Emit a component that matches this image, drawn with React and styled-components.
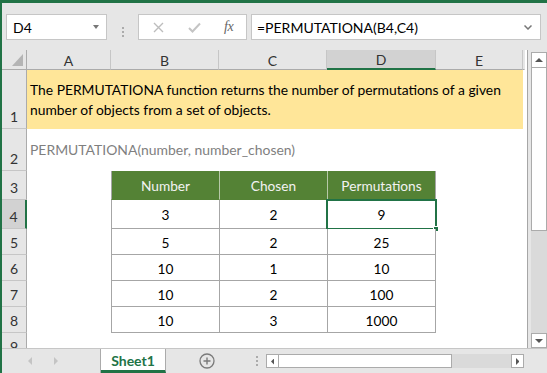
import React from 'react';
import styled, { createGlobalStyle } from 'styled-components';

const FONT = `"Lato", "Open Sans", "Liberation Sans", sans-serif`;
const GREEN = '#217346';

const Global = createGlobalStyle`
  html, body { margin: 0; padding: 0; background: #e6e6e6; overflow: hidden; }
  body { font-family: ${FONT}; }
  * { box-sizing: border-box; }
`;

const Window = styled.div`
  width: 547px;
  height: 373px;
  border-top: 3px solid ${GREEN};
  border-left: 2px solid ${GREEN};
  background: #e6e6e6;
  display: flex;
  flex-direction: column;
  overflow: hidden;
`;

/* ---------- formula bar ---------- */
const FormulaBar = styled.div`
  height: 47px;
  flex: none;
  display: flex;
  align-items: flex-start;
  padding: 11px 0 0 4px;
`;

const Box = styled.div`
  height: 26px;
  width: ${p => p.$w}px;
  flex: none;
  background: #fff;
  border: 1px solid #c6c6c6;
  display: flex;
  align-items: center;
  position: relative;
  font-size: 14px;
  color: #000;
`;

const NameText = styled.span`
  padding-left: 6px;
  flex: 1;
`;

const DownTri = styled.span`
  width: 0;
  height: 0;
  border-left: 3.5px solid transparent;
  border-right: 3.5px solid transparent;
  border-top: 4px solid #777;
  margin-right: 7px;
`;

const Splitter = styled.div`
  width: ${p => p.$w}px;
  flex: none;
  height: 100%;
  display: flex;
  flex-direction: column;
  align-items: center;
  justify-content: center;
  gap: 2px;
  span {
    width: 2px;
    height: 2px;
    background: #ababab;
  }
`;

const FxIcons = styled.div`
  display: flex;
  align-items: center;
  width: 100%;
  padding-left: 13px;
`;

const IconSlot = styled.span`
  width: ${p => p.$w}px;
  display: flex;
  justify-content: center;
  align-items: center;
`;

const Fx = styled.span`
  font-family: "Liberation Serif", "DejaVu Serif", serif;
  font-style: italic;
  font-size: 14px;
  color: #666;
  letter-spacing: -0.5px;
`;

const FormulaText = styled.span`
  flex: 1;
  padding-left: 5px;
  font-size: 14px;
`;

const Chevron = styled.svg`
  margin-right: 8px;
`;

/* ---------- sheet ---------- */
const Middle = styled.div`
  flex: 1;
  display: flex;
  min-height: 0;
  overflow: hidden;
`;

const Sheet = styled.div`
  width: 523px;
  flex: none;
  display: flex;
  flex-direction: column;
  background: #fff;
  overflow: hidden;
`;

const Row = styled.div`
  display: flex;
  height: ${p => p.$h}px;
  flex: none;
`;

const Corner = styled.div`
  width: 25px;
  flex: none;
  background: #e6e6e6;
  border-right: 1px solid #ababab;
  border-bottom: 1px solid #ababab;
  display: flex;
  align-items: flex-end;
  justify-content: flex-end;
  padding: 0 3px 3px 0;
`;

const ColHead = styled.div`
  width: ${p => p.$w}px;
  flex: ${p => (p.$fill ? '1' : 'none')};
  background: ${p => (p.$sel ? '#d2d2d2' : '#e6e6e6')};
  border-right: 1px solid ${p => (p.$fill ? 'transparent' : '#c6c6c6')};
  border-bottom: ${p => (p.$sel ? `2px solid ${GREEN}` : '1px solid #ababab')};
  display: flex;
  align-items: center;
  justify-content: center;
  font-size: 14px;
  color: #333;
  padding-top: 1px;
`;

const RowHead = styled.div`
  width: 25px;
  flex: none;
  background: ${p => (p.$sel ? '#d2d2d2' : '#e6e6e6')};
  border-right: ${p => (p.$sel ? `2px solid ${GREEN}` : '1px solid #ababab')};
  border-bottom: 1px solid #c6c6c6;
  display: flex;
  align-items: flex-end;
  justify-content: center;
  padding-bottom: 3px;
  font-size: 14px;
  color: #333;
`;

const Cell = styled.div`
  width: ${p => p.$w}px;
  flex: ${p => (p.$fill ? '1' : 'none')};
  background: ${p => p.$bg || '#fff'};
`;

const NoteCell = styled.div`
  width: 496px;
  flex: none;
  background: #ffe699;
  display: flex;
  flex-direction: column;
  justify-content: center;
  padding-left: 3px;
  font-size: 13.85px;
  line-height: 20px;
  color: #000;
`;

const SyntaxCell = styled.div`
  width: 496px;
  flex: none;
  display: flex;
  align-items: center;
  padding: 0 0 1px 3px;
  font-size: 13.95px;
  color: #7f7f7f;
`;

const TCell = styled.div`
  width: ${p => p.$w}px;
  flex: none;
  position: relative;
  background: ${p => (p.$head ? '#548235' : '#fff')};
  color: ${p => (p.$head ? '#f2f2f2' : '#000')};
  border-left: 1px solid ${p => (p.$head && !p.$first ? '#b7c9a8' : '#a6a6a6')};
  border-right: ${p => (p.$last ? '1px solid #a6a6a6' : 'none')};
  border-bottom: 1px solid ${p => (p.$head ? '#548235' : '#a6a6a6')};
  display: flex;
  align-items: center;
  justify-content: center;
  font-size: 13.7px;
  padding-top: 1px;
`;

const Selection = styled.div`
  position: absolute;
  left: -2px;
  top: -1px;
  right: -2px;
  bottom: -2px;
  border: 2px solid ${GREEN};
  pointer-events: none;
`;

const Handle = styled.div`
  position: absolute;
  right: -4px;
  bottom: -4px;
  width: 6px;
  height: 6px;
  background: ${GREEN};
  border: 1px solid #fff;
`;

/* ---------- vertical scrollbar ---------- */
const VScroll = styled.div`
  width: 22px;
  flex: none;
  border-left: 1px solid #a6a6a6;
  background: #e6e6e6;
  display: flex;
  flex-direction: column;
  padding: 2px 2px 0 3px;
`;

const ScrollBtn = styled.div`
  width: ${p => p.$w}px;
  height: ${p => p.$h}px;
  flex: none;
  background: #fff;
  border: 1px solid #ababab;
  display: flex;
  align-items: center;
  justify-content: center;
`;

const VThumb = styled.div`
  height: 163px;
  flex: none;
  background: #fff;
  border: 1px solid #ababab;
  border-top: none;
`;

const Track = styled.div`
  flex: 1;
  background: #dadada;
`;

/* ---------- bottom bar ---------- */
const BottomBar = styled.div`
  height: 25px;
  flex: none;
  display: flex;
  border-top: 1px solid #c6c6c6;
  background: #e6e6e6;
`;

const TabNav = styled.div`
  width: 99px;
  flex: none;
  border-right: 1px solid #ababab;
  display: flex;
  align-items: center;
  padding-left: 26px;
  gap: 22px;
`;

const SheetTab = styled.div`
  width: 65px;
  flex: none;
  background: #fff;
  border-right: 1px solid #ababab;
  border-bottom: 3px solid ${GREEN};
  display: flex;
  align-items: center;
  justify-content: center;
  font-weight: 700;
  font-size: 14px;
  color: ${GREEN};
  padding-top: 2px;
`;

const AddSheet = styled.div`
  width: 82px;
  flex: none;
  display: flex;
  align-items: center;
  justify-content: center;
`;

const HScroll = styled.div`
  flex: 1;
  display: flex;
  align-items: center;
  padding-right: 23px;
`;

const HThumb = styled.div`
  width: 173px;
  height: 14px;
  flex: none;
  background: #fff;
  border: 1px solid #ababab;
  border-left: none;
`;

const HTrack = styled.div`
  flex: 1;
  height: 14px;
  background: #dadada;
`;

const Tri = ({ dir, color = '#555', size = 4 }) => {
  const s = size;
  const pts = {
    up: `0,${s} ${s},0 ${2 * s},${s}`,
    down: `0,0 ${2 * s},0 ${s},${s}`,
    left: `${s},0 ${s},${2 * s} 0,${s}`,
    right: `0,0 0,${2 * s} ${s},${s}`,
  }[dir];
  const w = dir === 'up' || dir === 'down' ? 2 * s : s;
  const h = dir === 'up' || dir === 'down' ? s : 2 * s;
  return (
    <svg width={w} height={h} viewBox={`0 0 ${w} ${h}`}>
      <polygon points={pts} fill={color} />
    </svg>
  );
};

const cols = [
  { k: 'A', w: 84 },
  { k: 'B', w: 108 },
  { k: 'C', w: 108 },
  { k: 'D', w: 109, sel: true },
  { k: 'E', w: 87 },
];

const data = [
  [3, 2, 9],
  [5, 2, 25],
  [10, 1, 10],
  [10, 2, 100],
  [10, 3, 1000],
];

const TableRow = ({ n, h, vals, head, sel }) => (
  <Row $h={h}>
    <RowHead $sel={sel}>{n}</RowHead>
    <Cell $w={84} />
    <TCell $w={108} $head={head} $first>{vals[0]}</TCell>
    <TCell $w={108} $head={head}>{vals[1]}</TCell>
    <TCell $w={109} $head={head} $last>
      {vals[2]}
      {sel && (
        <Selection>
          <Handle />
        </Selection>
      )}
    </TCell>
    <Cell $fill />
  </Row>
);

export default function App() {
  return (
    <>
      <Global />
      <Window>
        <FormulaBar>
          <Box $w={101}>
            <NameText>D4</NameText>
            <DownTri />
          </Box>
          <Splitter $w={31}>
            <span />
            <span />
            <span />
          </Splitter>
          <Box $w={109}>
            <FxIcons>
              <IconSlot $w={13}>
                <svg width="11" height="11" viewBox="0 0 11 11">
                  <path d="M1 1 L10 10 M10 1 L1 10" stroke="#bdbdbd" strokeWidth="1.4" />
                </svg>
              </IconSlot>
              <IconSlot $w={23} />
              <IconSlot $w={13}>
                <svg width="13" height="11" viewBox="0 0 13 11">
                  <path d="M1 6 L4.5 9.5 L12 1.5" stroke="#c4c4c4" strokeWidth="2" fill="none" />
                </svg>
              </IconSlot>
              <IconSlot $w={23} />
              <Fx>fx</Fx>
            </FxIcons>
          </Box>
          <Splitter $w={4} />
          <Box $w={290}>
            <FormulaText>=PERMUTATIONA(B4,C4)</FormulaText>
            <Chevron width="8" height="5" viewBox="0 0 8 5">
              <path d="M0.5 0.5 L4 4 L7.5 0.5" stroke="#777" strokeWidth="1.5" fill="none" />
            </Chevron>
          </Box>
        </FormulaBar>

        <Middle>
          <Sheet>
            <Row $h={20}>
              <Corner>
                <svg width="11" height="12" viewBox="0 0 11 12">
                  <polygon points="11,0 11,12 0,12" fill="#b4b4b4" />
                </svg>
              </Corner>
              {cols.map(c => (
                <ColHead key={c.k} $w={c.w} $sel={c.sel}>
                  {c.k}
                </ColHead>
              ))}
              <ColHead $fill />
            </Row>
            <Row $h={59}>
              <RowHead>1</RowHead>
              <NoteCell>
                <span>The PERMUTATIONA function returns the number of permutations of a given</span>
                <span>number of objects from a set of objects.</span>
              </NoteCell>
              <Cell $fill />
            </Row>
            <Row $h={42}>
              <RowHead>2</RowHead>
              <SyntaxCell>PERMUTATIONA(number, number_chosen)</SyntaxCell>
              <Cell $fill />
            </Row>
            <TableRow n={3} h={29} head vals={['Number', 'Chosen', 'Permutations']} />
            {data.map((d, i) => (
              <TableRow key={i} n={i + 4} h={i === 0 ? 29 : 26} vals={d} sel={i === 0} />
            ))}
            <Row $h={26}>
              <RowHead>9</RowHead>
              <Cell $fill />
            </Row>
          </Sheet>
          <Cell $w={2} />
          <VScroll>
            <ScrollBtn $w={16} $h={16}>
              <Tri dir="up" color="#555" size={4} />
            </ScrollBtn>
            <VThumb />
            <Track />
            <ScrollBtn $w={16} $h={15}>
              <Tri dir="down" color="#555" size={4} />
            </ScrollBtn>
          </VScroll>
        </Middle>

        <BottomBar>
          <TabNav>
            <Tri dir="left" color="#c4c4c4" size={4} />
            <Tri dir="right" color="#c4c4c4" size={4} />
          </TabNav>
          <SheetTab>Sheet1</SheetTab>
          <AddSheet>
            <svg width="16" height="16" viewBox="0 0 16 16">
              <circle cx="8" cy="8" r="7" stroke="#7a7a7a" strokeWidth="1.3" fill="none" />
              <path d="M8 4.5 V11.5 M4.5 8 H11.5" stroke="#7a7a7a" strokeWidth="1.4" />
            </svg>
          </AddSheet>
          <HScroll>
            <Splitter $w={18}>
              <span />
              <span />
              <span />
            </Splitter>
            <ScrollBtn $w={13} $h={14}>
              <Tri dir="left" color="#555" size={3.5} />
            </ScrollBtn>
            <HThumb />
            <HTrack />
            <ScrollBtn $w={13} $h={14}>
              <Tri dir="right" color="#555" size={3.5} />
            </ScrollBtn>
          </HScroll>
        </BottomBar>
      </Window>
    </>
  );
}
